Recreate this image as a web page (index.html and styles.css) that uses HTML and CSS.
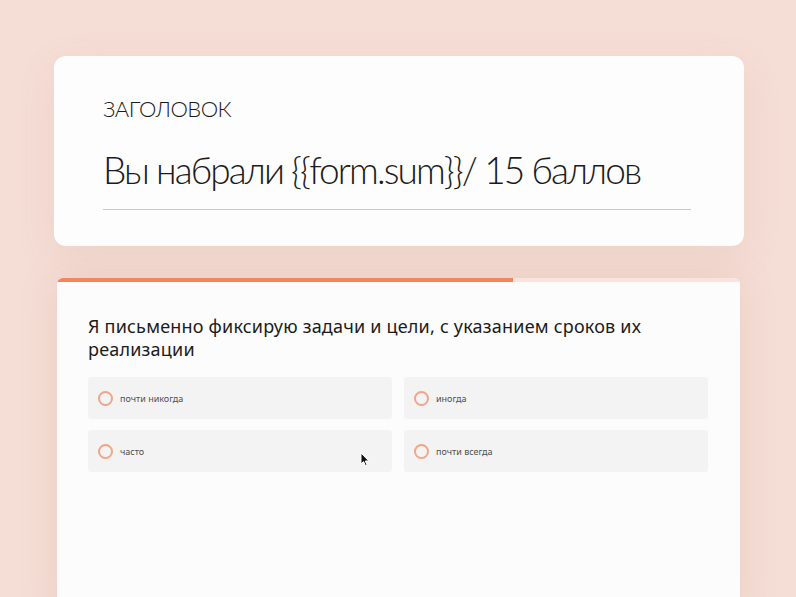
FILE: index.html
```html
<!DOCTYPE html>
<html lang="ru">
    <head>
        <meta charset="UTF-8"/>
        <meta name="viewport" content="width=device-width, initial-scale=1.0"/>
        <title>Результат</title>
        <link rel="stylesheet" href="styles.css">
    </head>
    <body>
        <div class="page">
            <div class="result">
                <div class="result-label">ЗАГОЛОВОК</div>
                <div class="result-title">Вы набрали {{form.sum}}/ 15 баллов</div>
            </div>

            <div class="quiz">
                <div class="progress"><div class="progress-fill" style="width: 66.8%"></div></div>
                <div class="quiz-body">
                    <div class="question">Я письменно фиксирую задачи и цели, с указанием сроков их реализации</div>
                    <div class="answers">
                        <div class="answer"><span class="radio"></span>почти никогда</div>
                        <div class="answer"><span class="radio"></span>иногда</div>
                        <div class="answer"><span class="radio"></span>часто</div>
                        <div class="answer"><span class="radio"></span>почти всегда</div>
                    </div>
                </div>
                <!-- курсор мыши поверх варианта -->
                <svg class="cursor" width="10" height="15" viewBox="0 0 10 15">
                    <path d="M1 1 L1 12 L3.6 9.6 L5.6 14 L7.2 13.3 L5.3 9 L8.8 9 Z" fill="#111" stroke="#fff" stroke-width="1"/>
                </svg>
            </div>
        </div>
    </body>
</html>
```

FILE: styles.css
```css
*{margin: 0px; padding: 0px; box-sizing: border-box}
body{background: #f5ded6; font-family: "Lato", "Noto Sans", sans-serif; color: #1b1b1b; overflow: hidden}
.page{padding: 56px 0 0 54px; width: 796px; height: 597px}

.result{width: 690px; height: 190px; background: #fdfdfd; border-radius: 12px; padding: 41px 53px 0 49px; box-shadow: 0 12px 40px rgba(170, 110, 85, 0.10)}
.result-label{font-size: 22px; font-weight: 300; letter-spacing: -0.5px; line-height: 24px}
.result-title{margin-top: 26px; font-size: 37px; font-weight: 300; letter-spacing: -1.9px; line-height: 46px; padding-bottom: 16px; border-bottom: 1px solid #c9c9c9}

.quiz{position: relative; margin: 32px 0 0 3px; width: 683px; height: 340px; background: #fcfcfc; border-radius: 6px 6px 0 0; overflow: hidden; box-shadow: 0 0 40px rgba(170, 110, 85, 0.14)}
.progress{height: 4px; background: #fbe3da}
.progress-fill{height: 4px; background: #f5845f}
.quiz-body{padding: 33px 32px 0 31px}
.question{font-family: "Noto Sans", sans-serif; font-size: 18px; letter-spacing: 0.2px; line-height: 23px; width: 600px}
.answers{margin-top: 16px; display: grid; grid-template-columns: 304px 304px; gap: 11px 12px}
.answer{height: 42px; background: #f3f3f3; border-radius: 3px; display: flex; align-items: center; padding-left: 10px; font-family: "Noto Sans", sans-serif; font-size: 9px; color: #505050}
.radio{width: 15px; height: 15px; border: 2px solid #f0a688; border-radius: 50%; margin-right: 7px}
.cursor{position: absolute; left: 303px; top: 174px}
```
